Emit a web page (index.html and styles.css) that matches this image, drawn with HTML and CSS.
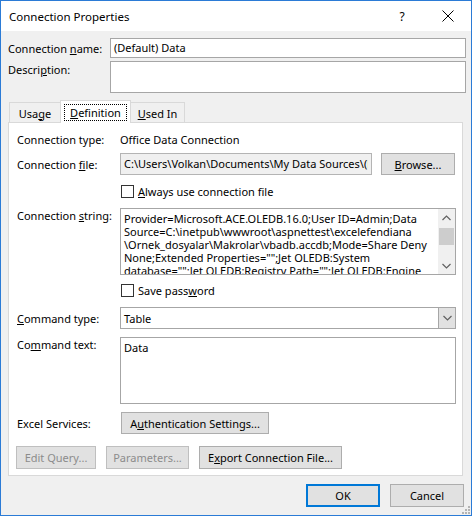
FILE: index.html
```html
<!DOCTYPE html>
<html>
<head>
<meta charset="utf-8">
<link rel="stylesheet" href="styles.css">
</head>
<body>
<div class="win">
  <div class="titlebar">
    <span class="title">Connection Properties</span>
    <span class="tbtn help">?</span>
    <span class="tbtn close">
      <svg width="12" height="12" viewBox="0 0 12 12"><path d="M0.5 0.5 L11.5 11.5 M11.5 0.5 L0.5 11.5" stroke="#000" stroke-width="1" fill="none"/></svg>
    </span>
  </div>
  <div class="content">
    <div class="top-row">
      <label class="top-lbl">Connection <u>n</u>ame:</label>
      <div class="input name-input">(Default) Data</div>
    </div>
    <div class="top-row desc-row">
      <label class="top-lbl">Descri<u>p</u>tion:</label>
      <div class="input desc-input"></div>
    </div>
    <div class="tabs">
      <div class="tab tab-usage">Usa<u>g</u>e</div>
      <div class="tab tab-sel"><span class="focus"><u>D</u>efinition</span></div>
      <div class="tab tab-used"><u>U</u>sed In</div>
    </div>
    <div class="panel">
      <div class="row r-type">
        <span class="lbl">Connection type:</span>
        <span class="val">Office Data Connection</span>
      </div>
      <div class="row r-file">
        <span class="lbl">Connection <u>f</u>ile:</span>
        <div class="ctrl file-ctrl">
          <div class="input file-input"><span class="file-text">C:\Users\Volkan\Documents\My Data Sources\(D</span></div>
          <div class="btn browse"><u>B</u>rowse...</div>
        </div>
      </div>
      <div class="row r-check">
        <span class="lbl"></span>
        <div class="ctrl check"><span class="box"></span><span><u>A</u>lways use connection file</span></div>
      </div>
      <div class="row r-string">
        <span class="lbl lbl-top">Connection <u>s</u>tring:</span>
        <div class="ctrl area">
          <div class="area-text">Provider=Microsoft.ACE.OLEDB.16.0;User ID=Admin;Data
Source=C:\inetpub\wwwroot\aspnettest\excelefendiana
\Ornek_dosyalar\Makrolar\vbadb.accdb;Mode=Share Deny
None;Extended Properties="";Jet OLEDB:System
database="";Jet OLEDB:Registry Path="";Jet OLEDB:Engine</div>
          <div class="sbar">
            <div class="sarrow"><svg width="9" height="6" viewBox="0 0 9 6"><path d="M0.5 5 L4.5 1 L8.5 5" stroke="#606060" stroke-width="1.2" fill="none"/></svg></div>
            <div class="strack"><div class="sthumb"></div></div>
            <div class="sarrow"><svg width="9" height="6" viewBox="0 0 9 6"><path d="M0.5 1 L4.5 5 L8.5 1" stroke="#606060" stroke-width="1.2" fill="none"/></svg></div>
          </div>
        </div>
      </div>
      <div class="row r-save">
        <span class="lbl"></span>
        <div class="ctrl check"><span class="box"></span><span>Save pass<u>w</u>ord</span></div>
      </div>
      <div class="row r-ctype">
        <span class="lbl"><u>C</u>ommand type:</span>
        <div class="ctrl select">
          <span class="sel-val">Table</span>
          <span class="sel-btn"><svg width="9" height="6" viewBox="0 0 9 6"><path d="M0.5 1 L4.5 5 L8.5 1" stroke="#606060" stroke-width="1.2" fill="none"/></svg></span>
        </div>
      </div>
      <div class="row r-ctext">
        <span class="lbl lbl-top">Co<u>m</u>mand text:</span>
        <div class="ctrl area cmd-area"><div class="area-text">Data</div></div>
      </div>
      <div class="row r-excel">
        <span class="lbl">Excel Services:</span>
        <div class="ctrl"><div class="btn auth">A<u>u</u>thentication Settings...</div></div>
      </div>
      <div class="row r-btns">
        <div class="btn dis edit">Edit Query...</div>
        <div class="btn dis params">Parameters...</div>
        <div class="btn export">E<u>x</u>port Connection File...</div>
      </div>
    </div>
    <div class="footer">
      <div class="btn ok">OK</div>
      <div class="btn cancel">Cancel</div>
    </div>
  </div>
  <svg class="grip" width="10" height="10" viewBox="0 0 10 10">
    <rect x="7" y="1" width="2" height="2" fill="#b4b4b4"/>
    <rect x="4" y="4" width="2" height="2" fill="#b4b4b4"/>
    <rect x="7" y="4" width="2" height="2" fill="#b4b4b4"/>
    <rect x="1" y="7" width="2" height="2" fill="#b4b4b4"/>
    <rect x="4" y="7" width="2" height="2" fill="#b4b4b4"/>
    <rect x="7" y="7" width="2" height="2" fill="#b4b4b4"/>
  </svg>
</div>
</body>
</html>
```

FILE: styles.css
```css
* { box-sizing: border-box; }
html, body { margin: 0; padding: 0; background: #fff; }
body {
  font-family: "Noto Sans", "Open Sans", sans-serif;
  font-size: 11px;
  line-height: 15px;
  color: #000;
}
u { text-decoration: underline; text-underline-offset: 1px; }

.win {
  width: 472px;
  height: 516px;
  border: 1px solid #2b7bd6;
  background: #f0f0f0;
  display: flex;
  flex-direction: column;
  position: relative;
  overflow: hidden;
}

.titlebar {
  height: 30px;
  background: #fff;
  display: flex;
  align-items: center;
  padding-left: 8px;
  flex: none;
}
.title { flex: 1; font-size: 11.5px; padding-top: 1px; }
.tbtn {
  width: 46px;
  height: 30px;
  display: flex;
  align-items: center;
  justify-content: center;
}
.help { font-size: 12px; }
.close svg { display: block; }

.content {
  flex: 1;
  display: flex;
  flex-direction: column;
  padding: 7px 5px 0 7px;
}

.top-row { display: flex; align-items: center; height: 20px; }
.top-lbl { width: 102px; flex: none; }
.input {
  border: 1px solid #a6a6a6;
  background: #fff;
  padding: 0 3px;
  white-space: nowrap;
  overflow: hidden;
}
.name-input { flex: 1; height: 20px; line-height: 18px; }
.desc-row { margin-top: 3px; height: 32px; align-items: flex-start; }
.desc-row .top-lbl { padding-top: 1px; }
.desc-input { flex: 1; height: 32px; }

.tabs {
  display: flex;
  align-items: flex-end;
  height: 22px;
  margin-top: 7px;
  padding-left: 1px;
  position: relative;
  z-index: 1;
}
.tab {
  height: 20px;
  border: 1px solid #d9d9d9;
  border-bottom: none;
  background: #f0f0f0;
  display: flex;
  align-items: center;
  justify-content: center;
  padding-top: 1px;
}
.tab-usage { width: 51px; border-right: none; }
.tab-sel {
  width: 71px;
  height: 23px;
  margin-bottom: -1px;
  background: #fff;
  padding-top: 0;
}
.tab-used { width: 54px; border-left: none; }
.focus {
  border: 1px dotted #000;
  width: 63px;
  height: 17px;
  display: flex;
  align-items: center;
  justify-content: center;
}

.panel {
  width: 455px;
  height: 354px;
  border: 1px solid #d9d9d9;
  background: #fff;
  padding: 8px 6px 6px 8px;
  display: flex;
  flex-direction: column;
}

.row { display: flex; align-items: center; flex: none; }
.lbl { width: 103px; flex: none; }
.lbl-top { align-self: flex-start; padding-top: 0; }
.ctrl { flex: 1; }

.r-type { height: 16px; }
.r-file { height: 22px; margin-top: 6px; }
.r-check { height: 13px; margin-top: 10px; }
.r-string { height: 67px; margin-top: 10px; align-items: stretch; }
.r-save { height: 13px; margin-top: 9px; }
.r-ctype { height: 22px; margin-top: 10px; }
.r-ctext { height: 67px; margin-top: 8px; align-items: stretch; }
.r-excel { height: 22px; margin-top: 8px; }
.r-btns { height: 23px; margin-top: 12px; margin-left: -1px; gap: 10px; }

.file-ctrl { display: flex; align-items: center; height: 22px; }
.file-input {
  width: 252px;
  height: 22px;
  line-height: 20px;
  background: #f0f0f0;
  border-color: #b4b4b4;
  flex: none;
}
.file-text { display: inline-block; max-width: 244px; overflow: hidden; vertical-align: top; }
.browse { width: 74px; margin-left: 9px; }

.check { display: flex; align-items: center; height: 13px; }
.box {
  width: 13px;
  height: 13px;
  border: 1px solid #333;
  background: #fff;
  margin-left: 1px;
  margin-right: 4px;
  flex: none;
}

.area {
  border: 1px solid #a6a6a6;
  background: #fff;
  display: flex;
  overflow: hidden;
}
.area-text {
  flex: 1;
  white-space: pre;
  overflow: hidden;
  line-height: 13px;
  padding: 3px 0 0 3px;
}
.cmd-area .area-text { padding-top: 3px; }
.sbar {
  width: 17px;
  flex: none;
  background: #f0f0f0;
  display: flex;
  flex-direction: column;
}
.sarrow {
  height: 17px;
  display: flex;
  align-items: center;
  justify-content: center;
}
.strack { flex: 1; padding: 2px 1px 0; }
.sthumb { height: 17px; background: #cdcdcd; }

.select {
  height: 22px;
  border: 1px solid #a6a6a6;
  background: #fff;
  display: flex;
  align-items: center;
}
.sel-val { flex: 1; padding-left: 3px; }
.sel-btn {
  width: 17px;
  height: 20px;
  border-left: 1px solid #a6a6a6;
  background: #e1e1e1;
  display: flex;
  align-items: center;
  justify-content: center;
}

.btn {
  height: 22px;
  border: 1px solid #adadad;
  background: #e1e1e1;
  display: flex;
  align-items: center;
  justify-content: center;
  flex: none;
  white-space: nowrap;
}
.auth { width: 148px; margin-left: 1px; }
.r-btns .btn { height: 23px; }
.dis { color: #8c8c8c; border-color: #bfbfbf; background: #e1e1e1; }
.edit { width: 80px; }
.params { width: 83px; }
.export { width: 143px; }

.footer {
  display: flex;
  justify-content: flex-end;
  gap: 10px;
  margin-top: 8px;
  padding-right: 2px;
}
.footer .btn { width: 74px; height: 23px; }
.ok { border: 2px solid #0078d7; }

.grip { position: absolute; right: 0; bottom: 0; }
```
